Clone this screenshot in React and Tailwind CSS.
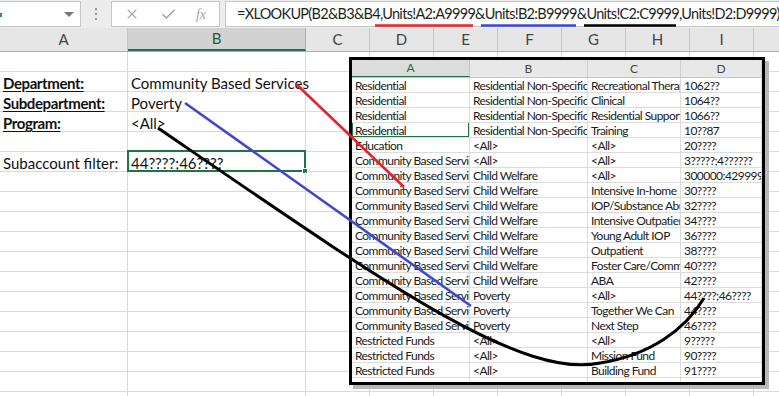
import { X, Check } from "lucide-react";

const sheetCols = [128, 178, 64, 64, 64, 64, 64, 64, 64, 64];
const letters = ["A", "B", "C", "D", "E", "F", "G", "H", "I", ""];

const leftCells = {
  1: ["Department:", "Community Based Services"],
  2: ["Subdepartment:", "Poverty"],
  3: ["Program:", "<All>"],
  5: ["Subaccount filter:", "44????;46????"],
};

const units = [
  ["Residential", "Residential Non-Specific", "Recreational Therapy", "1062??"],
  ["Residential", "Residential Non-Specific", "Clinical", "1064??"],
  ["Residential", "Residential Non-Specific", "Residential Support", "1066??"],
  ["Residential", "Residential Non-Specific", "Training", "10??87"],
  ["Education", "<All>", "<All>", "20????"],
  ["Community Based Services", "<All>", "<All>", "3?????;4??????"],
  ["Community Based Services", "Child Welfare", "<All>", "300000:429999"],
  ["Community Based Services", "Child Welfare", "Intensive In-home", "30????"],
  ["Community Based Services", "Child Welfare", "IOP/Substance Abuse", "32????"],
  ["Community Based Services", "Child Welfare", "Intensive Outpatient", "34????"],
  ["Community Based Services", "Child Welfare", "Young Adult IOP", "36????"],
  ["Community Based Services", "Child Welfare", "Outpatient", "38????"],
  ["Community Based Services", "Child Welfare", "Foster Care/Community", "40????"],
  ["Community Based Services", "Child Welfare", "ABA", "42????"],
  ["Community Based Services", "Poverty", "<All>", "44????;46????"],
  ["Community Based Services", "Poverty", "Together We Can", "44????"],
  ["Community Based Services", "Poverty", "Next Step", "46????"],
  ["Restricted Funds", "<All>", "<All>", "9?????"],
  ["Restricted Funds", "<All>", "Mission Fund", "90????"],
  ["Restricted Funds", "<All>", "Building Fund", "91????"],
];
const unitCols = [118, 118, 93, 81];

function FormulaBar() {
  return (
    <div className="h-[28px] bg-[#ececec] flex items-start pt-[1px] shrink-0">
      <div className="w-[81px] h-[26px] bg-white border border-[#c6c6c6] border-l-0 flex items-center relative">
        <div className="absolute left-0 top-[11px] w-[2px] h-[4px] bg-[#2b7cd3]" />
        <div className="ml-auto mr-[6px] w-0 h-0 border-l-[5px] border-r-[5px] border-t-[5px] border-l-transparent border-r-transparent border-t-[#777]" />
      </div>
      <div className="w-[30px] h-[26px] flex flex-col items-center justify-center gap-[3px]">
        <div className="w-[2px] h-[2px] bg-[#999]" />
        <div className="w-[2px] h-[2px] bg-[#999]" />
        <div className="w-[2px] h-[2px] bg-[#999]" />
      </div>
      <div className="w-[109px] h-[26px] bg-white border border-[#c6c6c6] flex items-center text-[#a6a6a6]">
        <div className="w-[40px] flex justify-center"><X size={16} strokeWidth={1.6} /></div>
        <div className="w-[32px] flex justify-center"><Check size={17} strokeWidth={2.2} /></div>
        <div className="w-[34px] flex justify-center font-['Liberation_Serif',serif] italic text-[14px]">fx</div>
      </div>
      <div className="ml-[5px] flex-1 h-[26px] bg-white border border-[#c6c6c6] border-r-0 flex items-center pl-[11px] text-[14.5px] text-[#1f1f1f] whitespace-nowrap overflow-hidden tracking-[-0.7px]">
        =XLOOKUP(B2&amp;B3&amp;B4,Units!A2:A9999&amp;Units!B2:B9999&amp;Units!C2:C9999,Units!D2:D9999)
      </div>
    </div>
  );
}

function HeaderRow() {
  return (
    <div className="h-[24px] flex bg-[#e6e6e6] border-b border-[#ababab] shrink-0">
      {sheetCols.map((w, i) => (
        <div
          key={i}
          style={{ width: w }}
          className={
            i === 1
              ? "shrink-0 flex items-center justify-center text-[15px] text-[#1e5e38] bg-[#d2d2d2] border-r border-[#ababab] border-b-2 border-b-[#217346]"
              : "shrink-0 flex items-center justify-center text-[15px] text-[#444] border-r border-[#c8c8c8]"
          }
        >
          {letters[i]}
        </div>
      ))}
    </div>
  );
}

function SheetRows() {
  const rows = Array.from({ length: 18 });
  return (
    <div className="flex flex-col">
      {rows.map((_, r) => {
        const c = leftCells[r] || [];
        return (
          <div key={r} className="h-[20px] flex shrink-0 border-b border-[#dadada]">
            {sheetCols.map((w, i) => (
              <div
                key={i}
                style={{ width: w }}
                className="shrink-0 border-r border-[#dadada] relative text-[15px] text-[#111] leading-[22px]"
              >
                {i === 0 && c[0] && (
                  <span className={r < 4 ? "pl-[3px] font-bold underline underline-offset-[2px] whitespace-nowrap tracking-[-0.4px]" : "pl-[3px] whitespace-nowrap"}>
                    {c[0]}
                  </span>
                )}
                {i === 1 && c[1] && (
                  <span className="pl-[3px] whitespace-nowrap absolute left-0 top-0">{c[1]}</span>
                )}
                {i === 1 && r === 5 && (
                  <div className="absolute -left-[1px] -top-[2px] w-[179px] h-[22px] border-2 border-[#217346]">
                    <div className="absolute -right-[4px] -bottom-[4px] w-[6px] h-[6px] bg-[#217346] border border-white" />
                  </div>
                )}
              </div>
            ))}
          </div>
        );
      })}
    </div>
  );
}

function UnitsPicture() {
  return (
    <div className="absolute left-[349px] top-[57px] border-[3px] border-black bg-white shadow-[4px_4px_0_#b8b8b8] z-10">
      <div className="w-[410px] h-[322px] flex flex-col overflow-hidden text-[12px] text-[#1a1a1a]">
        <div className="h-[18px] flex bg-[#e8e8e8] border-b border-[#c4c4c4] shrink-0">
          {["A", "B", "C", "D"].map((l, i) => (
            <div
              key={l}
              style={{ width: unitCols[i] }}
              className={
                i === 0
                  ? "shrink-0 flex items-center justify-center text-[#2d6b45] bg-[#dcdcdc] border-r border-[#c4c4c4] border-b border-b-[#217346]"
                  : "shrink-0 flex items-center justify-center text-[#444] border-r border-[#d0d0d0]"
              }
            >
              {l}
            </div>
          ))}
        </div>
        {units.map((row, r) => (
          <div key={r} className="h-[15px] flex shrink-0 border-b border-[#dcdcdc]">
            {row.map((t, i) => (
              <div
                key={i}
                style={{ width: unitCols[i] }}
                className="shrink-0 border-r border-[#dcdcdc] overflow-hidden whitespace-nowrap pl-[3px] leading-[15px] relative tracking-[-0.55px]"
              >
                {t}
                {i === 0 && r === 3 && (
                  <div className="absolute inset-0 -top-[1px] border border-[#217346]" />
                )}
              </div>
            ))}
          </div>
        ))}
        <div className="flex flex-1">
          {unitCols.map((w, i) => (
            <div key={i} style={{ width: w }} className="shrink-0 border-r border-[#dcdcdc]" />
          ))}
        </div>
      </div>
    </div>
  );
}

function Arrows() {
  return (
    <svg className="absolute inset-0 z-20 pointer-events-none" width="779" height="396" viewBox="0 0 779 396">
      <line x1="375" y1="25.5" x2="473" y2="25.5" stroke="#e3242b" strokeWidth="2.5" />
      <line x1="481" y1="25.5" x2="576" y2="25.5" stroke="#3f48cc" strokeWidth="2.5" />
      <line x1="584" y1="25.5" x2="676" y2="25.5" stroke="#000" strokeWidth="2.5" />
      <line x1="296" y1="84" x2="404" y2="187" stroke="#e3242b" strokeWidth="2.6" />
      <line x1="185" y1="103" x2="471" y2="306" stroke="#3f48cc" strokeWidth="2.6" />
      <path
        d="M158,128 C380,280 520,380 600,363 C650,355 685,330 704,298"
        fill="none"
        stroke="#000"
        strokeWidth="3"
      />
    </svg>
  );
}

export default function App() {
  return (
    <div className="w-[779px] h-[396px] overflow-hidden relative bg-white font-['Lato',sans-serif] flex flex-col">
      <FormulaBar />
      <HeaderRow />
      <SheetRows />
      <UnitsPicture />
      <Arrows />
    </div>
  );
}
